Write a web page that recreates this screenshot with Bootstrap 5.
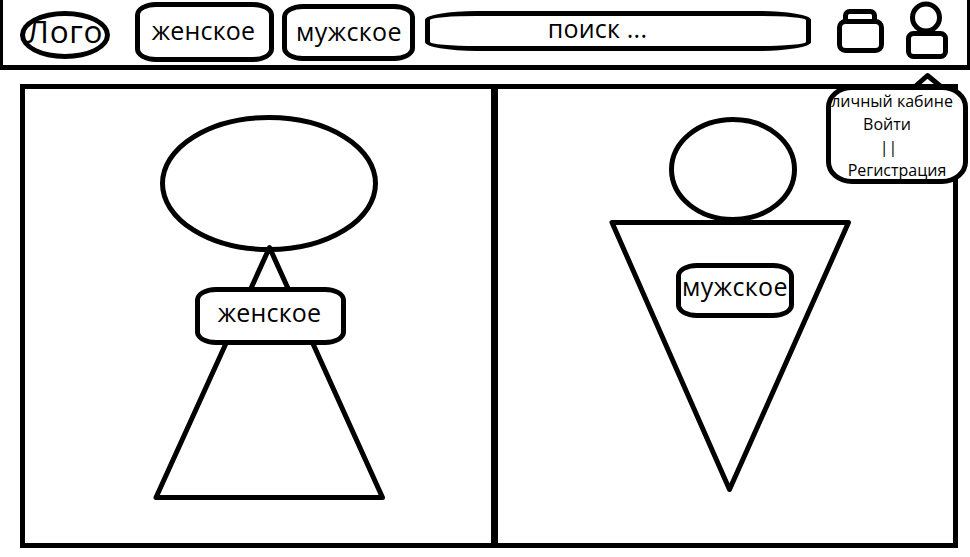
<!DOCTYPE html>
<html lang="ru">
<head>
<meta charset="utf-8">
<meta name="viewport" content="width=device-width, initial-scale=1">
<title>Магазин одежды</title>
<link href="https://cdn.jsdelivr.net/npm/bootstrap@5.3.0/dist/css/bootstrap.min.css" rel="stylesheet">
<style>
  body { font-family: "Open Sans", "Noto Sans", sans-serif; color: #000; background: #fff; overflow: hidden; }
  .topbar { height: 70px; border: solid #000; border-width: 0 3px 5px; }
  .outline { border: 5px solid #000; background: #fff; color: #000; font-size: 25px; letter-spacing: .2px; line-height: 1; white-space: nowrap; padding: 0; border-radius: 21px / 13px; }
  .outline:hover { background: #fff; color: #000; border-color: #000; }
  .logo { width: 90px; height: 48px; margin: 11px 25px 0 17px; border-radius: 50%; font-size: 31.5px; letter-spacing: .7px; }
  .logo span { margin-bottom: 9px; }
  .nav-women { width: 139px; height: 60px; margin: 2px 8px 0 0; }
  .nav-women span { margin: 0 2px 3px 0; }
  .nav-men { width: 133px; height: 57px; margin: 4px 10px 0 0; letter-spacing: .4px; }
  .nav-men span { margin: 0 0 3px 1px; }
  .search { width: 386px; height: 40px; margin: 11px 26px 0 0; border-radius: 52px / 9px; }
  .search span { margin-right: 41px; margin-bottom: 5px; }
  .icon-bag { margin: 9px 22px 0 0; }
  .icon-user { margin-top: 2px; }
  svg { display: block; fill: #fff; stroke: #000; stroke-width: 5; stroke-linejoin: round; overflow: visible; }
  .panels { width: 938px; height: 464px; margin: 14px 0 0 20px; border: 5px solid #000; }
  .panel-women { width: 473px; border-right: 7px solid #000; }
  .fig-women { margin: 26px 0 0 128px; }
  .fig-men { margin: 28px 0 0 112px; }
  .tag-women { left: 170px; top: 198px; width: 151px; height: 58px; }
  .tag-women span { margin: 0 2px 7px 0; }
  .tag-men { left: 178px; top: 174px; width: 118px; height: 55px; letter-spacing: .4px; }
  .tag-men span { margin-bottom: 9px; }
  .account { left: 826px; top: 85px; width: 142px; height: 99px; border: 5px solid #000; border-radius: 26px / 22px; background: #fff; font-size: 16px; line-height: 23px; }
  .account .tail { position: absolute; left: 82px; top: -16px; fill: none; }
  .account .line { display: block; white-space: nowrap; color: #000; text-decoration: none; }
  .account .line-title { margin-right: 9px; margin-left: -1px; }
  .account .line-login { margin-right: 20px; }
  .account .line-or { margin-right: 17px; }
</style>
<script src="https://cdn.jsdelivr.net/npm/bootstrap@5.3.0/dist/js/bootstrap.bundle.min.js"></script>
</head>
<body>
<header class="topbar d-flex align-items-start">
  <a class="outline logo d-flex align-items-center justify-content-center text-decoration-none flex-shrink-0" href="#"><span>Лого</span></a>
  <a class="btn outline nav-women d-flex align-items-center justify-content-center flex-shrink-0" href="#"><span>женское</span></a>
  <a class="btn outline nav-men d-flex align-items-center justify-content-center flex-shrink-0" href="#"><span>мужское</span></a>
  <div class="outline search d-flex align-items-center justify-content-center flex-shrink-0" role="search"><span>поиск ...</span></div>
  <svg class="icon-bag flex-shrink-0" width="47" height="44" viewBox="0 0 47 44">
    <rect x="8.5" y="2.5" width="29" height="16" rx="4"/>
    <rect x="2.5" y="12.5" width="42" height="29" rx="6"/>
  </svg>
  <svg class="icon-user flex-shrink-0" width="42" height="57" viewBox="0 0 42 57">
    <ellipse cx="20" cy="15.5" rx="13.5" ry="13.5"/>
    <rect x="2.5" y="31.5" width="37" height="23" rx="5"/>
  </svg>
</header>

<main class="panels d-flex">
  <section class="panel-women position-relative flex-shrink-0">
    <svg class="fig-women" width="240" height="400" viewBox="153 115 240 400">
      <ellipse cx="269" cy="183.5" rx="106.5" ry="66"/>
      <path d="M269.500 247.500 156 497.500H382.500Z"/>
    </svg>
    <a class="btn outline tag-women position-absolute d-flex align-items-center justify-content-center" href="#"><span>женское</span></a>
  </section>
  <section class="position-relative flex-grow-1">
    <svg class="fig-men" width="250" height="380" viewBox="610 117 250 380">
      <ellipse cx="733" cy="169.5" rx="61.5" ry="50"/>
      <path d="M612 222.500H848.500L729.500 489.500Z"/>
    </svg>
    <a class="btn outline tag-men position-absolute d-flex align-items-center justify-content-center" href="#"><span>мужское</span></a>
  </section>
</main>

<aside class="account position-absolute text-center">
  <svg class="tail" width="30" height="16" viewBox="0 0 30 16"><path d="M1 13.500 14.500 1.500 29 13.500"/></svg>
  <span class="line line-title">личный кабине</span>
  <a class="line line-login" href="#">Войти</a>
  <span class="line line-or">||</span>
  <a class="line" href="#">Регистрация</a>
</aside>
</body>
</html>
